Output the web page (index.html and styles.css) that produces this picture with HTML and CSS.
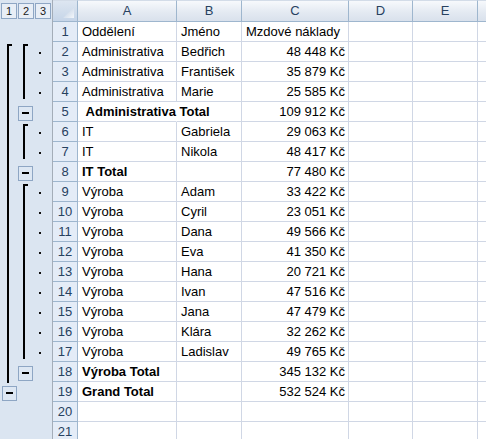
FILE: index.html
```html
<!DOCTYPE html>
<html lang="cs">
<head>
<meta charset="utf-8">
<title>Souhrny</title>
<link rel="stylesheet" href="styles.css">
</head>
<body>
<div class="app">
  <div class="outline">
    <div class="levels">
      <span class="lvl">1</span><span class="lvl">2</span><span class="lvl">3</span>
    </div>
    <div class="br br1 r2-19"></div>
    <div class="br br2 r2-5"></div>
    <div class="br br2 r6-8"></div>
    <div class="br br2 r9-18"></div>
    <div class="btn c1 r19"></div>
    <div class="btn c2 r5"></div>
    <div class="btn c2 r8"></div>
    <div class="btn c2 r18"></div>
    <div class="dot" style="grid-row:3"></div>
    <div class="dot" style="grid-row:4"></div>
    <div class="dot" style="grid-row:5"></div>
    <div class="dot" style="grid-row:7"></div>
    <div class="dot" style="grid-row:8"></div>
    <div class="dot" style="grid-row:10"></div>
    <div class="dot" style="grid-row:11"></div>
    <div class="dot" style="grid-row:12"></div>
    <div class="dot" style="grid-row:13"></div>
    <div class="dot" style="grid-row:14"></div>
    <div class="dot" style="grid-row:15"></div>
    <div class="dot" style="grid-row:16"></div>
    <div class="dot" style="grid-row:17"></div>
    <div class="dot" style="grid-row:18"></div>
  </div>
  <div class="sheet">
    <div class="corner"><span class="tri"></span></div>
    <div class="ch">A</div><div class="ch">B</div><div class="ch">C</div><div class="ch">D</div><div class="ch">E</div><div class="ch last"></div>

    <div class="rh">1</div><div class="c">Oddělení</div><div class="c">Jméno</div><div class="c">Mzdové náklady</div><div class="c"></div><div class="c"></div><div class="c"></div>
    <div class="rh">2</div><div class="c">Administrativa</div><div class="c">Bedřich</div><div class="c n">48 448 Kč</div><div class="c"></div><div class="c"></div><div class="c"></div>
    <div class="rh">3</div><div class="c">Administrativa</div><div class="c">František</div><div class="c n">35 879 Kč</div><div class="c"></div><div class="c"></div><div class="c"></div>
    <div class="rh">4</div><div class="c">Administrativa</div><div class="c">Marie</div><div class="c n">25 585 Kč</div><div class="c"></div><div class="c"></div><div class="c"></div>
    <div class="rh">5</div><div class="c b spill">&nbsp;Administrativa Total</div><div class="c"></div><div class="c n">109 912 Kč</div><div class="c"></div><div class="c"></div><div class="c"></div>
    <div class="rh">6</div><div class="c">IT</div><div class="c">Gabriela</div><div class="c n">29 063 Kč</div><div class="c"></div><div class="c"></div><div class="c"></div>
    <div class="rh">7</div><div class="c">IT</div><div class="c">Nikola</div><div class="c n">48 417 Kč</div><div class="c"></div><div class="c"></div><div class="c"></div>
    <div class="rh">8</div><div class="c b">IT Total</div><div class="c"></div><div class="c n">77 480 Kč</div><div class="c"></div><div class="c"></div><div class="c"></div>
    <div class="rh">9</div><div class="c">Výroba</div><div class="c">Adam</div><div class="c n">33 422 Kč</div><div class="c"></div><div class="c"></div><div class="c"></div>
    <div class="rh">10</div><div class="c">Výroba</div><div class="c">Cyril</div><div class="c n">23 051 Kč</div><div class="c"></div><div class="c"></div><div class="c"></div>
    <div class="rh">11</div><div class="c">Výroba</div><div class="c">Dana</div><div class="c n">49 566 Kč</div><div class="c"></div><div class="c"></div><div class="c"></div>
    <div class="rh">12</div><div class="c">Výroba</div><div class="c">Eva</div><div class="c n">41 350 Kč</div><div class="c"></div><div class="c"></div><div class="c"></div>
    <div class="rh">13</div><div class="c">Výroba</div><div class="c">Hana</div><div class="c n">20 721 Kč</div><div class="c"></div><div class="c"></div><div class="c"></div>
    <div class="rh">14</div><div class="c">Výroba</div><div class="c">Ivan</div><div class="c n">47 516 Kč</div><div class="c"></div><div class="c"></div><div class="c"></div>
    <div class="rh">15</div><div class="c">Výroba</div><div class="c">Jana</div><div class="c n">47 479 Kč</div><div class="c"></div><div class="c"></div><div class="c"></div>
    <div class="rh">16</div><div class="c">Výroba</div><div class="c">Klára</div><div class="c n">32 262 Kč</div><div class="c"></div><div class="c"></div><div class="c"></div>
    <div class="rh">17</div><div class="c">Výroba</div><div class="c">Ladislav</div><div class="c n">49 765 Kč</div><div class="c"></div><div class="c"></div><div class="c"></div>
    <div class="rh">18</div><div class="c b">Výroba Total</div><div class="c"></div><div class="c n">345 132 Kč</div><div class="c"></div><div class="c"></div><div class="c"></div>
    <div class="rh">19</div><div class="c b">Grand Total</div><div class="c"></div><div class="c n">532 524 Kč</div><div class="c"></div><div class="c"></div><div class="c"></div>
    <div class="rh">20</div><div class="c"></div><div class="c"></div><div class="c"></div><div class="c"></div><div class="c"></div><div class="c"></div>
    <div class="rh">21</div><div class="c"></div><div class="c"></div><div class="c"></div><div class="c"></div><div class="c"></div><div class="c"></div>
  </div>
</div>
</body>
</html>
```
FILE: styles.css
```css
html, body {
  margin: 0;
  padding: 0;
  background: #ffffff;
}
body {
  font-family: "Liberation Sans", Arial, sans-serif;
  font-size: 13px;
  color: #000;
  overflow: hidden;
}
.app {
  display: flex;
  width: 486px;
  height: 439px;
  overflow: hidden;
}

/* outline pane */
.outline {
  flex: 0 0 52px;
  border-right: 1px solid #a4adb8;
  background: #dbe5f1;
  display: grid;
  grid-template-columns: 16px 16px 20px;
  grid-template-rows: 22px;
  grid-auto-rows: 20px;
}
.levels {
  grid-column: 1 / 4;
  grid-row: 1;
  display: flex;
  gap: 1px;
  padding: 3px 0 0 1px;
  border-bottom: 1px solid #dbe5f1;
}
.lvl {
  width: 14px;
  height: 14px;
  border: 1px solid #8ea6c4;
  background: #e8eef6;
  font-size: 11px;
  line-height: 14px;
  text-align: center;
  color: #1a1a1a;
}
.br {
  border-left: 2px solid #000;
  border-top: 2px solid #000;
  width: 3px;
  margin-top: 2px;
  margin-left: 7px;
}
.br1 { grid-column: 1; }
.br2 { grid-column: 2; margin-bottom: 3px; }
.r2-19 { grid-row: 3 / 20; margin-bottom: -1px; }
.r2-5 { grid-row: 3 / 6; }
.r6-8 { grid-row: 7 / 9; }
.r9-18 { grid-row: 10 / 19; }
.btn {
  width: 13px;
  height: 13px;
  margin: 4px 0 0 2px;
  border: 1px solid #8ea6c4;
  background: #dde7f3;
  position: relative;
}
.btn::after {
  content: "";
  position: absolute;
  left: 3px;
  top: 5px;
  width: 7px;
  height: 2px;
  background: #000;
}
.c1 { grid-column: 1; }
.c2 { grid-column: 2; }
.r19 { grid-row: 20; }
.r5 { grid-row: 6; }
.r8 { grid-row: 9; }
.r18 { grid-row: 19; }
.dot {
  grid-column: 3;
  width: 2px;
  height: 2px;
  background: #111;
  margin: 10px 0 0 7px;
}

/* sheet */
.sheet {
  flex: 1;
  display: grid;
  grid-template-columns: 25px 99px 65px 107px 64px 65px 40px;
  grid-template-rows: 22px;
  grid-auto-rows: 20px;
}
.corner, .ch {
  box-sizing: border-box;
  border-top: 1px solid #d3dce8;
  border-bottom: 1px solid #9eb6ce;
  border-right: 1px solid #9eb6ce;
  background: linear-gradient(#f7f9fc, #e4eaf2 55%, #d9e1ec);
}
.ch {
  color: #27415f;
  text-align: center;
  line-height: 20px;
  margin-top: 0;
}
.corner {
  position: relative;
  background: linear-gradient(#dde6f1, #c6d5e8);
}
.tri {
  position: absolute;
  right: 3px;
  bottom: 3px;
  width: 11px;
  height: 11px;
  background: linear-gradient(135deg, #b8c9de, #f4f7fb);
  clip-path: polygon(100% 0, 100% 100%, 0 100%);
}
.rh {
  box-sizing: border-box;
  background: #e4ecf7;
  border-right: 1px solid #9eb6ce;
  border-bottom: 1px solid #9eb6ce;
  color: #27415f;
  text-align: center;
  line-height: 19px;
}
.c {
  box-sizing: border-box;
  border-right: 1px solid #d0d7e5;
  border-bottom: 1px solid #d0d7e5;
  line-height: 19px;
  padding: 0 3px 0 4px;
  white-space: nowrap;
  overflow: hidden;
}
.c.n { text-align: right; }
.c.b { font-weight: bold; }
.c.spill {
  overflow: visible;
  border-right-color: transparent;
  position: relative;
  z-index: 1;
}
```
